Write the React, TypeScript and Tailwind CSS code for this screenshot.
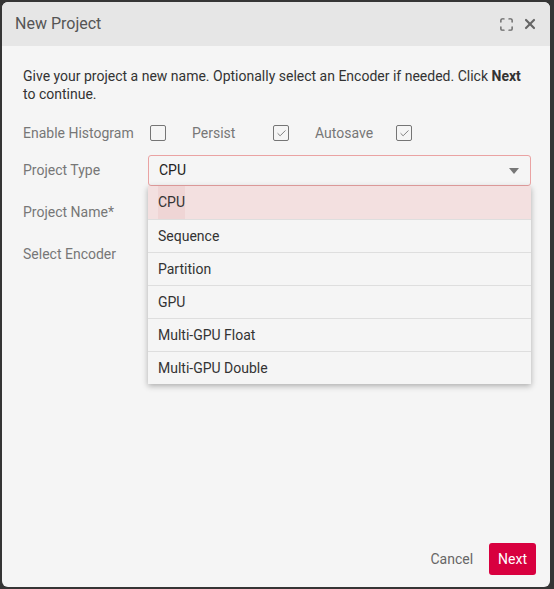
import { Maximize, X, Check } from "lucide-react";

const TYPES = ["CPU", "Sequence", "Partition", "GPU", "Multi-GPU Float", "Multi-GPU Double"];

function Box({ checked }: { checked?: boolean }) {
  return (
    <span className="w-[16px] h-[16px] border-[1.5px] border-[#757575] rounded-[2px] flex items-center justify-center shrink-0">
      {checked && <Check size={11} strokeWidth={2} className="text-[#757575]" />}
    </span>
  );
}

export default function App() {
  return (
    <div
      className="w-[554px] h-[589px] bg-[#353535] p-[2px] pr-[4px]"
      style={{ fontFamily: "Roboto, 'Liberation Sans', sans-serif" }}
    >
      <div className="h-[585px] rounded-[6px] overflow-hidden bg-[#f5f5f5] flex flex-col">
        {/* Header */}
        <div className="h-[44px] bg-[#e6e6e6] flex items-center pl-[13px] pr-[12px] shrink-0">
          <span className="text-[16px] text-[#555]">New Project</span>
          <div className="ml-auto flex items-center gap-[8px] text-[#666]">
            <Maximize size={15} strokeWidth={2.25} />
            <X size={16} strokeWidth={3.25} />
          </div>
        </div>

        {/* Body */}
        <div className="flex-1 pl-[21px] pr-[19px] pt-[21px] text-[14px]">
          <p className="text-[#333] leading-[18px]">
            Give your project a new name. Optionally select an Encoder if needed. Click{" "}
            <span className="font-bold">Next</span> to continue.
          </p>

          <div className="mt-[18px] h-[24px] flex items-center text-[#777]">
            <span className="w-[127px]">Enable Histogram</span>
            <Box />
            <span className="ml-[26px] w-[81px]">Persist</span>
            <Box checked />
            <span className="ml-[26px] w-[81px]">Autosave</span>
            <Box checked />
          </div>

          <div className="mt-[10px] flex items-center">
            <span className="w-[125px] text-[#777]">Project Type</span>
            <div className="relative flex-1">
              <div className="h-[31px] border border-[#eaa3a3] rounded-[3px] bg-[#f5f5f5] flex items-center pl-[10px] pr-[11px] text-[#222]">
                CPU
                <span className="ml-auto w-0 h-0 border-l-[5px] border-r-[5px] border-t-[6px] border-l-transparent border-r-transparent border-t-[#777]" />
              </div>
              <ul className="absolute left-0 right-0 top-[31px] bg-[#f5f5f5] shadow-[0_2px_6px_rgba(0,0,0,0.3)] z-10">
                {TYPES.map((t, i) => (
                  <li
                    key={t}
                    className={
                      "h-[33px] flex items-center px-[10px] text-[#333] " +
                      (i === 0 ? "bg-[#f3e0e0]" : "border-t border-[#dedede]")
                    }
                  >
                    {i === 0 ? (
                      <span className="bg-[#efd5d5] h-[33px] flex items-center">{t}</span>
                    ) : (
                      t
                    )}
                  </li>
                ))}
              </ul>
            </div>
          </div>

          <div className="mt-[11px] h-[31px] flex items-center text-[#777]">Project Name*</div>
          <div className="mt-[11px] h-[31px] flex items-center text-[#777]">Select Encoder</div>
        </div>

        {/* Footer */}
        <div className="flex items-center justify-end gap-[16px] pr-[14px] pb-[12px]">
          <button className="text-[14px] text-[#666]">Cancel</button>
          <button className="h-[32px] px-[9px] rounded-[3px] bg-[#d8003f] text-white text-[14px]">Next</button>
        </div>
      </div>
    </div>
  );
}
